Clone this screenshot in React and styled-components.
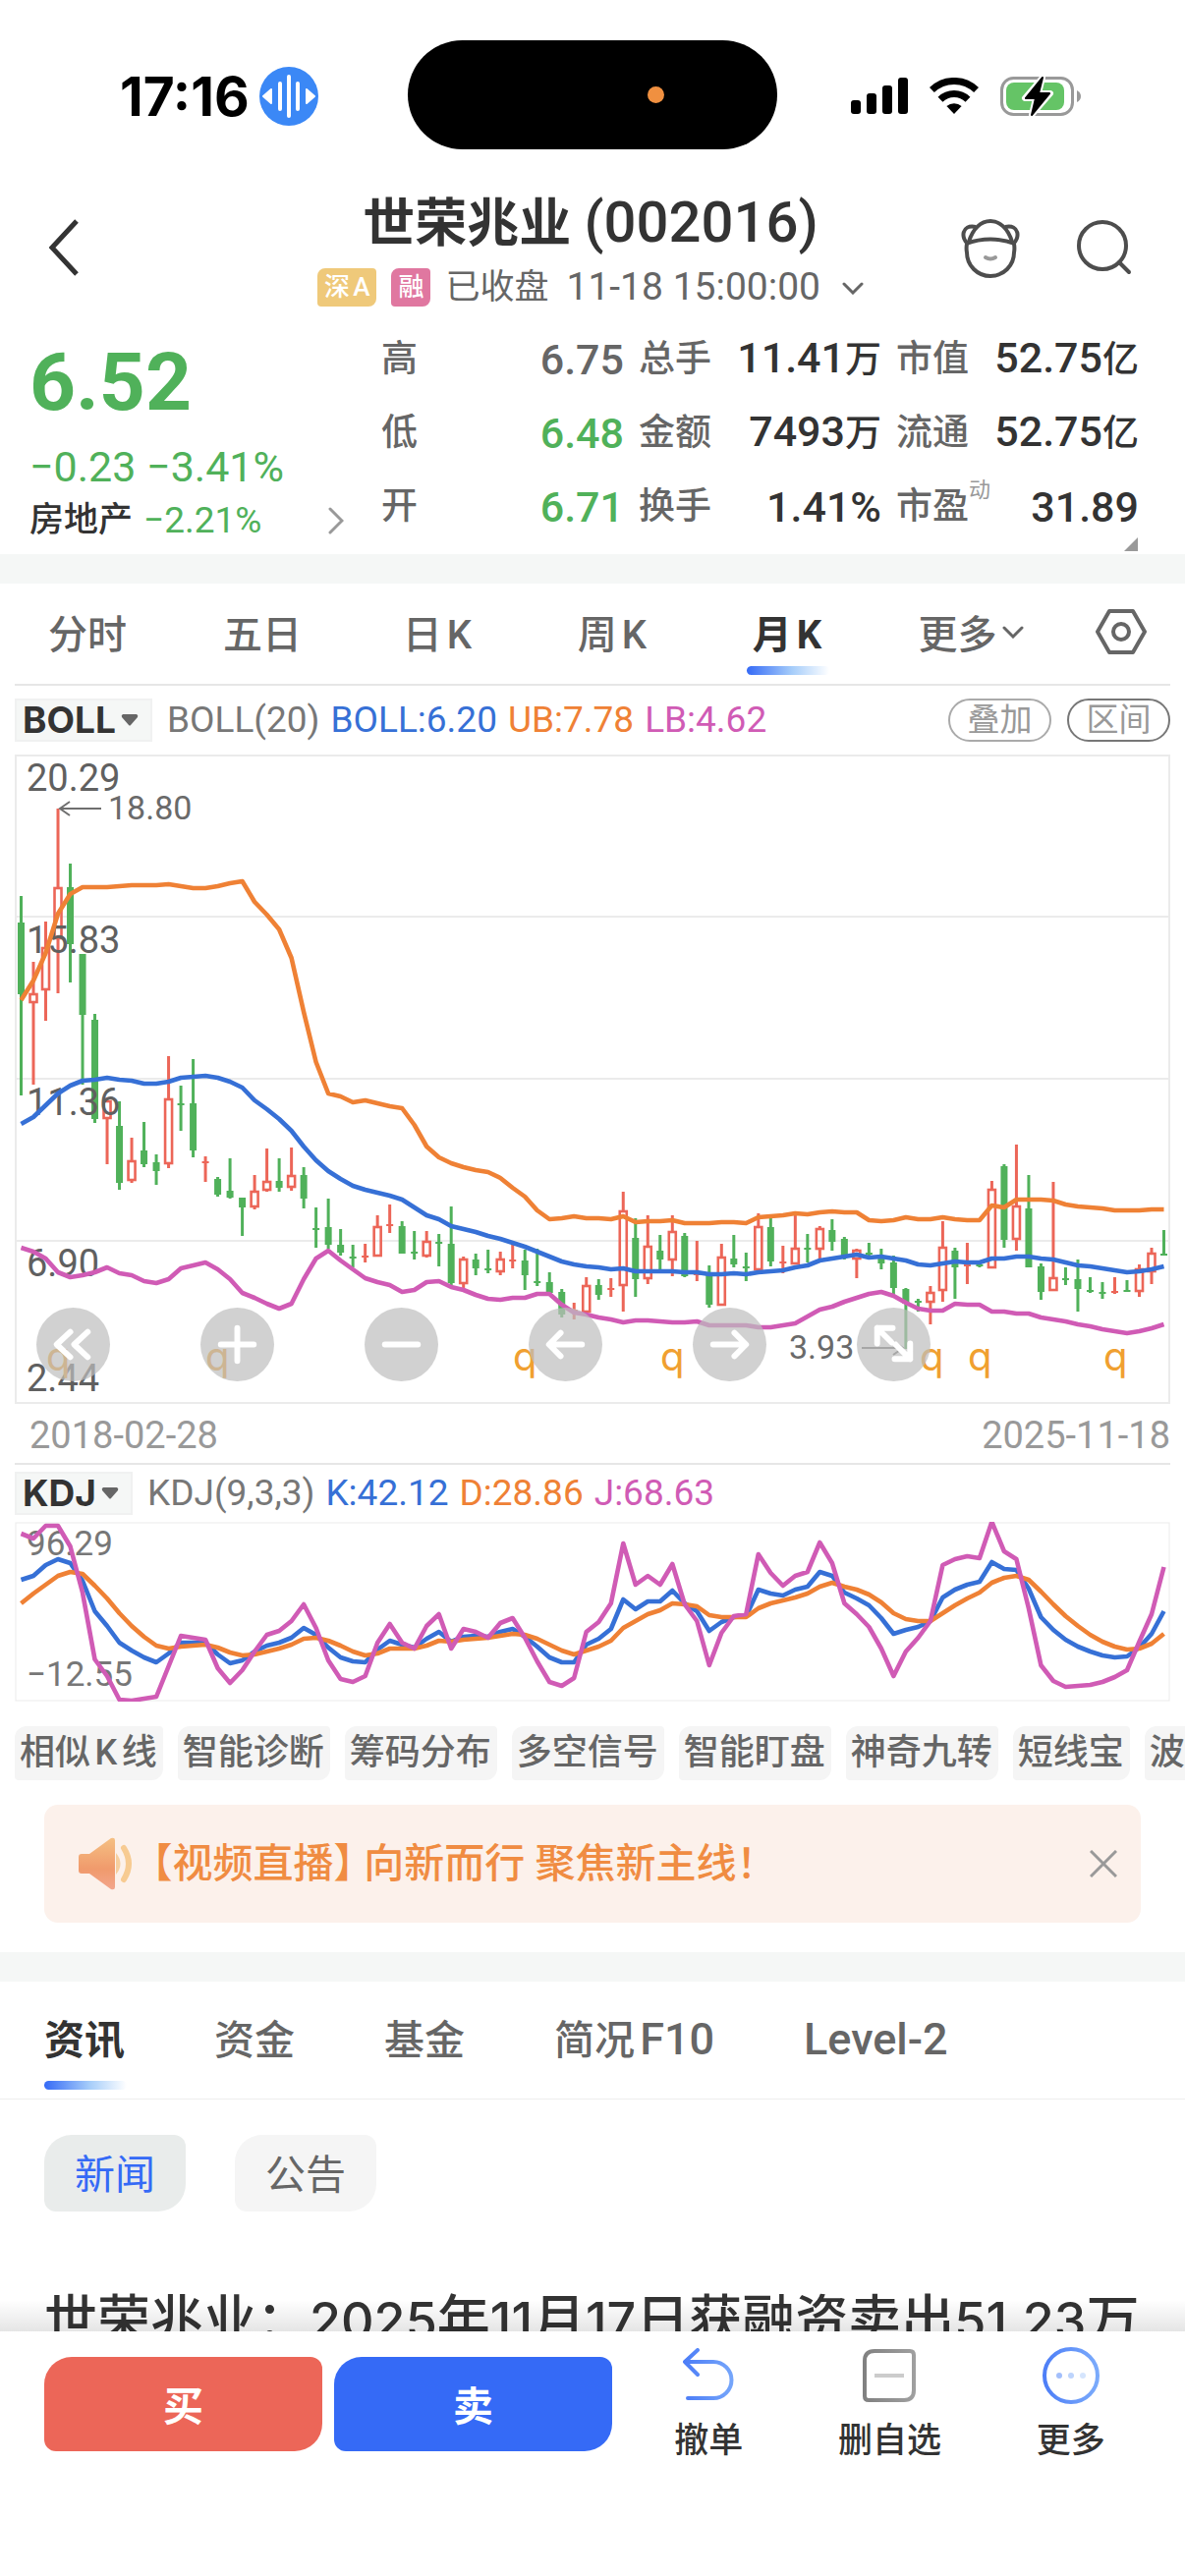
import React from "react";
import styled, { createGlobalStyle, css } from "styled-components";

const color = {
  ink: "#333333",
  text: "#666666",
  muted: "#999999",
  line: "#e6e6e6",
  band: "#f5f7f6",
  up: "#ec6658",
  down: "#50b15a",
  blue: "#3670d6",
  orange: "#ef8135",
  pink: "#d05bb5",
  brand: "#356af6",
};

const Global = createGlobalStyle`
  * { box-sizing: border-box; }
  body {
    margin: 0;
    background: #fff;
    color: ${color.text};
    font-family: Roboto, "Noto Sans CJK SC", sans-serif;
    text-autospace: normal;
  }
  button, select {
    border: 0;
    padding: 0;
    margin: 0;
    background: none;
    font: inherit;
    color: inherit;
    text-autospace: inherit;
  }
  svg { display: block; }
`;

const Screen = styled.div`
  display: flex;
  flex-direction: column;
  height: 100vh;
  overflow: hidden;
`;

const Content = styled.main`
  flex: 1;
  min-height: 0;
  overflow: hidden;
  position: relative;
`;

/* ---------- status bar ---------- */

const StatusBar = styled.div`
  display: grid;
  grid-template-columns: 1fr 376px 1fr;
  align-items: center;
  padding-top: 41px;
  color: #000;
`;

const StatusLeft = styled.div`
  display: flex;
  align-items: center;
  gap: 10px;
  padding: 3px 0 0 122px;
  font: 700 55px/60px Inter, sans-serif;
`;

const Island = styled.div`
  display: flex;
  align-items: center;
  justify-content: flex-end;
  height: 111px;
  padding-right: 115px;
  border-radius: 56px;
  background: #000;
`;

const RecordingDot = styled.span`
  width: 17px;
  height: 17px;
  border-radius: 50%;
  background: #f09040;
`;

const StatusRight = styled.div`
  display: flex;
  align-items: center;
  justify-content: flex-end;
  gap: 22px;
  padding: 2px 104px 0 0;
`;

/* ---------- header ---------- */

const Header = styled.header`
  display: grid;
  grid-template-columns: 1fr auto 1fr;
  align-items: center;
  padding: 44px 54px 0 50px;
`;

const IconButton = styled.button`
  display: inline-flex;
  align-items: center;
  justify-content: center;
`;

const HeaderActions = styled.div`
  display: flex;
  justify-content: flex-end;
  gap: 58px;
`;

const TitleBlock = styled.div`
  display: flex;
  flex-direction: column;
  align-items: center;
  gap: 13px;
`;

const Title = styled.h1`
  height: 64px;
  margin: 0;
  font-size: 53px;
  line-height: 64px;
  font-weight: 700;
  color: ${color.ink};
  white-space: nowrap;
`;

const Code = styled.span`
  font-size: 58px;
  font-weight: 500;
  line-height: 40px;
`;

const SubTitle = styled.div`
  display: flex;
  align-items: center;
  height: 39px;
  font-size: 35px;
  line-height: 39px;
  white-space: nowrap;
`;

const Badge = styled.span`
  padding: 0 7px;
  margin-right: 15px;
  border-radius: 8px 4px 8px 4px;
  background: ${(p) => p.$bg};
  color: #fff;
  font-size: 26px;
  font-weight: 500;
  line-height: 39px;
`;

const Clock = styled.time`
  margin: 0 22px 0 18px;
  font-size: 39px;
`;

/* ---------- quote ---------- */

const Quote = styled.section`
  position: relative;
  display: grid;
  grid-template-columns: 358px 1fr;
  height: 252px;
  padding: 0 47px 0 30px;
`;

const QuoteMain = styled.div`
  padding-top: 35px;
  color: ${color.down};
`;

const Price = styled.div`
  font-size: 82px;
  line-height: 84px;
  font-weight: 700;
`;

const Change = styled.div`
  margin-top: 20px;
  font-size: 43px;
  line-height: 48px;
  white-space: nowrap;
`;

const Sector = styled.a`
  display: flex;
  align-items: center;
  margin-top: 11px;
  padding-right: 38px;
  font-size: 37px;
  line-height: 40px;
  color: inherit;
  text-decoration: none;
  svg { margin-left: auto; }
`;

const SectorName = styled.span`
  margin-right: 11px;
  font-size: 35px;
  font-weight: 500;
  color: ${color.ink};
`;

const Stats = styled.dl`
  display: grid;
  grid-template-columns: repeat(3, 1fr);
  grid-auto-rows: 75px;
  column-gap: 15px;
  margin: 16px 0 0;
`;

const Stat = styled.div`
  display: flex;
  align-items: center;
  justify-content: space-between;
  white-space: nowrap;
  line-height: 48px;
`;

const StatLabel = styled.dt`
  display: flex;
  font-size: 37px;
  font-weight: 500;
  sup {
    margin-top: -4px;
    font-size: 22px;
    font-weight: 400;
    line-height: 22px;
    color: ${color.muted};
  }
`;

const StatValue = styled.dd`
  margin: 0;
  font-size: 43px;
  font-weight: 500;
  text-autospace: no-autospace;
  color: ${(p) => p.$color || color.ink};
  span { font-size: 37px; }
`;

const Corner = styled.svg`
  position: absolute;
  right: 48px;
  bottom: 3px;
`;

const Band = styled.div`
  height: 30px;
  background: ${color.band};
`;

/* ---------- period tabs ---------- */

const underline = css`
  &::after {
    content: "";
    position: absolute;
    left: ${(p) => p.$mark || "0"};
    bottom: 9px;
    width: 84px;
    height: 9px;
    border-radius: 5px;
    background: linear-gradient(90deg, #356af6, #a6cdfa 55%, #fff);
  }
`;

const PeriodTabs = styled.nav`
  display: grid;
  grid-template-columns: repeat(5, 178fr) 196fr 110fr;
  height: 102px;
  padding-right: 10px;
  font-size: 40px;
`;

const PeriodTab = styled.button`
  position: relative;
  display: flex;
  align-items: center;
  justify-content: center;
  gap: 5px;
  padding-bottom: 4px;
  font-weight: ${(p) => (p.$active ? 700 : 500)};
  color: ${(p) => (p.$active ? color.ink : color.text)};
  ${(p) => p.$active && underline}
`;

const Divider = styled.hr`
  height: 2px;
  margin: 0 15px;
  border: 0;
  background: ${color.line};
`;

/* ---------- indicator rows ---------- */

const IndicatorRow = styled.div`
  display: flex;
  align-items: center;
  height: ${(p) => p.$height};
  padding: 0 15px;
  font-size: 37px;
  line-height: 44px;
  white-space: nowrap;
`;

const Picker = styled.label`
  display: flex;
  align-items: center;
  gap: 5px;
  height: 44px;
  margin-right: 15px;
  padding: 0 12px 0 6px;
  border: 2px solid #f0f1f1;
  background: ${color.band};
  select {
    appearance: none;
    font: 700 37px/40px Inter, sans-serif;
    color: ${color.ink};
  }
`;

const Reading = styled.span`
  margin-right: 11px;
  color: ${(p) => p.$color || "#777777"};
`;

const PillGroup = styled.div`
  display: flex;
  gap: 16px;
  margin-left: auto;
`;

const Pill = styled.button`
  width: 105px;
  height: 44px;
  border: 2px solid ${(p) => p.$border};
  border-radius: 22px;
  font-size: 33px;
  line-height: 36px;
  color: ${color.muted};
`;

/* ---------- charts ---------- */

const ChartBox = styled.div`
  position: relative;
  margin: 0 15px;
`;

const ChartSvg = styled.svg`
  width: 100%;
  height: auto;
  font-family: Roboto, sans-serif;
`;

const ChartControls = styled.div`
  position: absolute;
  left: 22px;
  bottom: 23px;
  display: flex;
  gap: 92px;
`;

const RoundButton = styled.button`
  width: 75px;
  height: 75px;
  border-radius: 50%;
  background: rgba(190, 190, 190, 0.7);
`;

const Dates = styled.div`
  display: flex;
  justify-content: space-between;
  align-items: center;
  height: 60px;
  padding: 4px 15px 0 30px;
  font-size: 38px;
  line-height: 40px;
  color: ${color.muted};
`;

/* ---------- shortcuts and notice ---------- */

const Shortcuts = styled.div`
  display: flex;
  gap: 15px;
  padding: 25px 0 25px 15px;
  overflow: hidden;
`;

const Shortcut = styled.button`
  flex-shrink: 0;
  height: 55px;
  padding: 0 6px 0 5px;
  border-radius: 12px 4px 12px 4px;
  background: #f5f5f5;
  font-size: 36px;
  font-weight: 500;
  line-height: 55px;
`;

const Notice = styled.aside`
  display: flex;
  align-items: center;
  gap: 18px;
  height: 120px;
  margin: 0 45px 30px;
  padding: 0 24px 0 35px;
  border-radius: 14px;
  background: #fcf1eb;
  color: #f08c42;
  font-size: 41px;
  font-weight: 500;
  line-height: 60px;
  font-feature-settings: "halt";
  white-space: nowrap;
  button { margin-left: auto; }
`;

/* ---------- news ---------- */

const InfoTabs = styled.nav`
  display: flex;
  gap: 91px;
  height: 120px;
  padding-left: 45px;
  border-bottom: 1px solid #eeeeee;
`;

const InfoTab = styled.button`
  position: relative;
  font-size: 41px;
  line-height: 60px;
  font-weight: ${(p) => (p.$active ? 700 : 500)};
  color: ${(p) => (p.$active ? color.ink : color.text)};
  ${(p) => p.$active && underline}
`;

const Latin = styled.span`
  font-size: 45px;
  line-height: 40px;
`;

const Filters = styled.div`
  display: flex;
  gap: 50px;
  padding: 36px 45px 76px;
`;

const Filter = styled.button`
  width: 144px;
  height: 78px;
  padding-bottom: 4px;
  border-radius: 28px 12px 28px 12px;
  background: ${(p) => (p.$active ? "#e9eceb" : "#f5f5f5")};
  color: ${(p) => (p.$active ? color.brand : color.text)};
  font-size: 41px;
`;

const Headline = styled.a`
  display: block;
  margin: 0 45px;
  color: ${color.ink};
  font-size: 54px;
  font-weight: 500;
  line-height: 72px;
  text-decoration: none;
  text-autospace: no-autospace;
  white-space: nowrap;
`;

const Figure = styled.span`
  font-family: Inter, sans-serif;
  font-size: 52px;
  line-height: 40px;
`;

const Fade = styled.div`
  position: absolute;
  left: 0;
  right: 0;
  bottom: 0;
  height: 32px;
  background: linear-gradient(rgba(0, 0, 0, 0), rgba(0, 0, 0, 0.1));
`;

/* ---------- action bar ---------- */

const ActionBar = styled.footer`
  display: flex;
  align-items: flex-start;
  height: 249px;
  padding: 0 24px 0 45px;
`;

const TradeButtons = styled.div`
  display: flex;
  gap: 12px;
  margin: 26px 6px 0 0;
`;

const TradeButton = styled.button`
  width: 283px;
  height: 96px;
  padding-bottom: 2px;
  border-radius: 28px 12px 28px 12px;
  background: ${(p) => p.$bg};
  color: #fff;
  font-size: 41px;
  font-weight: 700;
`;

const Action = styled.button`
  flex: 1;
  display: flex;
  flex-direction: column;
  align-items: center;
  color: ${color.ink};
  font-size: 35px;
  font-weight: 500;
  line-height: 40px;
`;

const ActionIcon = styled.span`
  display: flex;
  align-items: center;
  justify-content: center;
  height: 60px;
  margin: 15px 0 17px;
`;

/* ---------- data: distances in chart units from the top of the pane ---------- */

const candles = [
  "g144,171,244,347", "r211,243,253,336", "r170,196,240,271", "r55,135,188,243", "g111,135,193,232",
  "g203,203,265,336", "g264,270,371,375", "r349,352,371,417", "g353,378,436,443", "r390,413,434,436",
  "g374,403,417,420", "g407,415,424,438", "r307,350,417,421", "g337,355,356,383", "g310,355,403,410",
  "r409,414,416,435", "g430,432,448,450", "g411,444,451,452", "g451,451,461,490", "r428,444,461,463",
  "r401,434,444,445", "g411,434,441,445", "r400,428,441,444", "g420,428,452,462", "g461,482,483,502",
  "g452,481,499,503", "g483,499,507,510", "g499,511,512,522", "r498,510,512,517", "r469,480,511,511",
  "r458,478,481,487", "g475,480,508,508", "g485,506,508,514", "r485,495,511,512", "g488,496,498,521",
  "g460,498,538,541", "r511,513,539,544", "g508,514,523,530", "g504,523,525,528", "r506,513,527,530",
  "r497,514,516,523", "g504,515,530,545", "g503,536,538,541", "g527,537,548,549", "g544,547,570,573",
  "r558,565,566,575", "r532,540,568,568", "g534,540,550,555", "r533,543,545,552", "r445,464,541,567",
  "g472,492,534,552", "r469,500,534,539", "g489,505,514,527", "r469,485,515,531", "g487,490,531,532",
  "r495,528,531,536", "g520,527,560,563", "r498,511,561,561", "g489,513,519,522", "g507,521,523,536",
  "r467,480,525,525", "g472,481,516,521", "r500,516,518,528", "r469,502,519,519", "g488,502,504,517",
  "r480,482,504,513", "g473,484,496,505", "g491,493,510,514", "r503,504,514,533", "g497,507,509,512",
  "g503,513,518,524", "g510,517,543,550", "g543,544,559,605", "g554,556,558,567", "r541,547,558,580",
  "r475,501,546,557", "g502,505,522,554", "r497,519,521,539", "g517,519,522,522", "r434,442,523,523",
  "g417,419,494,502", "r397,459,494,505", "g428,462,522,522", "g518,521,547,555", "r435,532,546,546",
  "g522,533,535,540", "g514,534,544,567", "g532,545,547,548", "g537,547,549,554", "r532,546,548,549",
  "g535,545,547,547", "r519,523,547,552", "r502,507,527,539", "g484,508,510,510",
].map((s) => ({ up: s[0] === "r", v: s.slice(1).split(",").map(Number) }));

const upper = [250, 230, 202, 162, 142, 135, 135, 135, 134, 133, 133, 133, 132, 134, 136, 136, 134, 131, 129, 150, 163, 178, 207, 262, 313, 345, 348, 354, 352, 355, 358, 360, 377, 399, 410, 416, 420, 423, 425, 431, 441, 450, 464, 473, 472, 470, 472, 472, 473, 470, 476, 475, 475, 474, 477, 477, 477, 476, 476, 477, 471, 470, 469, 467, 468, 466, 465, 466, 466, 474, 475, 474, 471, 473, 473, 471, 473, 474, 474, 459, 461, 453, 453, 453, 454, 458, 460, 461, 462, 464, 464, 464, 463, 463];
const middle = [376, 369, 357, 345, 337, 332, 331, 329, 331, 332, 335, 335, 333, 329, 328, 327, 329, 333, 339, 352, 361, 371, 383, 399, 413, 424, 432, 439, 443, 446, 449, 453, 461, 469, 473, 480, 483, 486, 490, 493, 497, 501, 506, 511, 516, 519, 521, 522, 524, 523, 526, 526, 526, 526, 527, 527, 529, 529, 528, 529, 527, 526, 525, 522, 520, 515, 513, 511, 509, 512, 511, 513, 515, 519, 520, 518, 516, 517, 517, 513, 513, 511, 511, 513, 514, 517, 520, 521, 523, 525, 527, 526, 524, 521];
const lower = [502, 506, 513, 527, 532, 530, 527, 522, 528, 530, 536, 538, 534, 523, 520, 517, 524, 534, 548, 553, 559, 564, 559, 534, 513, 505, 515, 524, 533, 537, 540, 547, 545, 537, 536, 542, 545, 550, 554, 555, 553, 553, 549, 549, 560, 568, 570, 573, 575, 578, 576, 576, 577, 578, 578, 577, 581, 581, 581, 581, 583, 583, 581, 579, 572, 565, 562, 557, 553, 549, 547, 551, 558, 564, 566, 566, 559, 560, 560, 567, 567, 569, 569, 573, 575, 577, 580, 582, 585, 587, 589, 587, 584, 580];

const kLine = [59, 55, 44, 38, 42, 60, 91, 106, 123, 131, 138, 143, 134, 123, 123, 123, 135, 144, 141, 132, 126, 123, 118, 108, 115, 128, 138, 142, 143, 130, 121, 125, 128, 119, 112, 122, 117, 116, 117, 112, 109, 117, 127, 138, 143, 143, 125, 119, 109, 79, 89, 81, 81, 70, 83, 91, 111, 102, 97, 96, 69, 73, 75, 69, 66, 51, 55, 72, 78, 85, 98, 114, 110, 107, 101, 77, 69, 64, 61, 41, 48, 49, 68, 97, 110, 120, 127, 132, 136, 138, 137, 128, 114, 91];
const dLine = [83, 73, 64, 55, 51, 53, 65, 78, 93, 106, 117, 126, 129, 127, 126, 125, 128, 133, 136, 135, 132, 129, 125, 119, 118, 121, 126, 132, 136, 134, 129, 129, 129, 126, 121, 122, 120, 119, 118, 116, 114, 115, 119, 125, 131, 135, 131, 127, 121, 108, 101, 94, 90, 83, 84, 86, 95, 97, 97, 97, 88, 83, 80, 77, 73, 66, 62, 66, 69, 74, 82, 93, 99, 101, 101, 93, 85, 78, 72, 62, 57, 55, 59, 71, 84, 96, 106, 115, 122, 127, 130, 129, 124, 114];
const jLine = [12, 17, 4, 4, 25, 72, 140, 157, 181, 182, 180, 178, 147, 116, 118, 120, 149, 164, 151, 132, 115, 111, 101, 84, 108, 141, 160, 163, 157, 123, 104, 123, 129, 106, 94, 129, 109, 112, 118, 103, 98, 118, 142, 163, 167, 159, 112, 102, 83, 22, 64, 55, 64, 43, 84, 101, 146, 113, 96, 94, 33, 52, 65, 55, 51, 21, 42, 83, 94, 107, 129, 157, 132, 118, 101, 44, 38, 35, 37, 0, 30, 38, 88, 146, 162, 168, 167, 166, 163, 158, 151, 122, 94, 46];

const xAt = (i) => 6.5 + (i * 1163) / 93;
const toPoints = (ys) => ys.map((y, i) => `${xAt(i).toFixed(1)},${y}`).join(" ");

function Series({ ys, stroke }) {
  return <polyline points={toPoints(ys)} fill="none" stroke={stroke} strokeWidth="4.6" strokeLinejoin="round" />;
}

function Candle({ x, up, v: [high, top, bottom, low] }) {
  const tone = up ? color.up : color.down;
  if (bottom - top < 4) {
    return (
      <g fill={tone}>
        <rect x={x - 1.5} y={high} width="3" height={low - high} />
        <rect x={x - 3.5} y={top} width="7" height="2" />
      </g>
    );
  }
  if (up) {
    return (
      <g fill={tone}>
        <rect x={x - 1.5} y={high} width="3" height={top - high} />
        <rect x={x - 1.5} y={bottom} width="3" height={low - bottom} />
        <rect x={x - 3.5} y={top + 1} width="7" height={bottom - top - 2} fill="none" stroke={tone} strokeWidth="2.6" />
      </g>
    );
  }
  return (
    <g fill={tone}>
      <rect x={x - 1.5} y={high} width="3" height={low - high} />
      <rect x={x - 3.5} y={top} width="7" height={bottom - top} />
    </g>
  );
}

const axis = [["20.29", 37], ["15.83", 202], ["11.36", 367], ["6.90", 531], ["2.44", 648]];
const marks = [32, 194, 507, 657, 921, 970, 1108];

function PriceChart() {
  return (
    <ChartSvg viewBox="0 0 1176 661" role="img" aria-label="月K线与布林带">
      <rect x="1" y="1" width="1174" height="659" fill="#fff" stroke="#ebebeb" strokeWidth="2" />
      {[165, 330, 495].map((y) => (
        <line key={y} x1="0" x2="1176" y1={y} y2={y} stroke="#ebebeb" strokeWidth="2" />
      ))}
      {candles.map((c, i) => (
        <Candle key={i} x={xAt(i)} {...c} />
      ))}
      <g fill="#606060" fontSize="38">
        {axis.map(([t, y]) => (
          <text key={t} x="12" y={y}>{t}</text>
        ))}
      </g>
      <g fill="#6a6a6a" fontSize="34">
        <text x="95" y="66">18.80</text>
        <text x="788" y="615">3.93</text>
      </g>
      <g fill="none" stroke="#6e6e6e" strokeWidth="2">
        <path d="M88 55H46M56 48L46 55L56 62" />
        <path d="M862 604H904M894 597L904 604L894 611" />
      </g>
      <Series ys={upper} stroke={color.orange} />
      <Series ys={middle} stroke={color.blue} />
      <Series ys={lower} stroke={color.pink} />
      <g fill="#f0a030" fontSize="40" fontFamily="Inter">
        {marks.map((x) => (
          <text key={x} x={x} y="627">q</text>
        ))}
      </g>
    </ChartSvg>
  );
}

function KdjChart() {
  return (
    <ChartSvg viewBox="0 0 1176 183" role="img" aria-label="KDJ指标">
      <rect x="1" y="1" width="1174" height="181" fill="#fff" stroke="#ebebeb" strokeWidth="1" />
      <g fill="#777777" fontSize="35">
        <text x="12" y="34">96.29</text>
        <text x="12" y="167">−12.55</text>
      </g>
      <Series ys={kLine} stroke={color.blue} />
      <Series ys={dLine} stroke={color.orange} />
      <Series ys={jLine} stroke={color.pink} />
    </ChartSvg>
  );
}

const controls = [
  ["最早", "M35 25L21 38L35 51M53 25L39 38L53 51"],
  ["放大", "M21 38H55M38 21V55"],
  ["缩小", "M21 38H55"],
  ["左移", "M55 38H22M33 26L21 38L33 50"],
  ["右移", "M21 38H54M43 26L55 38L43 50"],
  ["全屏", "M36 36L21 21M21 37V21H37M40 38L55 53M55 37V53H39"],
];

function Caret({ w = 22, h = 14, stroke = color.text, d = "M2 3L11 12L20 3" }) {
  return (
    <svg width={w} height={h} viewBox={`0 0 ${w} ${h}`} fill="none" stroke={stroke} strokeWidth="3" strokeLinecap="round">
      <path d={d} />
    </svg>
  );
}

function IndicatorPicker({ name, label }) {
  return (
    <Picker>
      <select aria-label={label} defaultValue={name}>
        <option>{name}</option>
      </select>
      <svg width="18" height="12" viewBox="0 0 18 12" fill={color.text}>
        <path d="M2 0H16Q18 1 17 3L10 11Q9 12 8 11L1 3Q0 1 2 0Z" />
      </svg>
    </Picker>
  );
}

const stats = [
  ["高", "6.75", "", color.text], ["总手", "11.41", "万"], ["市值", "52.75", "亿"],
  ["低", "6.48", "", color.down], ["金额", "7493", "万"], ["流通", "52.75", "亿"],
  ["开", "6.71", "", color.down], ["换手", "1.41%", ""], ["市盈", "31.89", "", color.ink, "动"],
];

export default function App() {
  return (
    <Screen>
      <Global />
      <Content>
        <StatusBar>
          <StatusLeft>
            17:16
            <svg width="60" height="60" viewBox="0 0 60 60">
              <circle cx="30" cy="30" r="30" fill="#3b88f6" />
              <path d="M30 10V50M21 17V43M39 17V43" stroke="#fff" strokeWidth="4" strokeLinecap="round" />
              <path d="M4 30L12 23V37ZM56 30L48 23V37Z" fill="#fff" stroke="#fff" strokeWidth="2" strokeLinejoin="round" />
            </svg>
          </StatusLeft>
          <Island>
            <RecordingDot />
          </Island>
          <StatusRight>
            <svg width="58" height="38" viewBox="0 0 58 38">
              <rect x="0" y="23" width="10" height="14" rx="3" />
              <rect x="16" y="16" width="10" height="21" rx="3" />
              <rect x="32" y="8" width="10" height="29" rx="3" />
              <rect x="48" y="0" width="10" height="37" rx="3" />
            </svg>
            <svg width="50" height="38" viewBox="0 0 50 38" fill="none" stroke="#000" strokeWidth="7">
              <path d="M2.4 12.6A32.5 32.5 0 0 1 47.6 12.6" />
              <path d="M11 22.2A20 20 0 0 1 39 22.2" />
              <path d="M17.4 29A11.5 11.5 0 0 1 32.6 29L25 37Z" fill="#000" stroke="none" />
            </svg>
            <svg width="84" height="40" viewBox="0 0 84 40">
              <rect x="1.5" y="1.5" width="72" height="37" rx="12" fill="none" stroke="#999" strokeWidth="3" />
              <rect x="6" y="6" width="59" height="28" rx="8" fill="#65c466" />
              <path d="M78 14Q82 16 82 20T78 26Z" fill="#999" />
              <path d="M43 1L25 22H36L32 39L51 17H39Z" fill="#000" stroke="#fff" strokeWidth="6" strokeLinejoin="round" paintOrder="stroke" />
              <path d="M43 1L26 22H36L32 39L50 17H39Z" stroke="#000" strokeWidth="2" strokeLinejoin="round" />
            </svg>
          </StatusRight>
        </StatusBar>

        <Header>
          <div>
            <IconButton aria-label="返回">
              <svg width="30" height="58" viewBox="0 0 30 58" fill="none" stroke={color.ink} strokeWidth="5">
                <path d="M28 2L3 29L28 56" />
              </svg>
            </IconButton>
          </div>
          <TitleBlock>
            <Title>
              世荣兆业 <Code>(002016)</Code>
            </Title>
            <SubTitle>
              <Badge $bg="#efc97a">深A</Badge>
              <Badge $bg="#e077a0">融</Badge>
              已收盘
              <Clock>11-18 15:00:00</Clock>
              <Caret />
            </SubTitle>
          </TitleBlock>
          <HeaderActions>
            <IconButton aria-label="智能助手">
              <svg width="60" height="62" viewBox="0 0 60 62" fill="none" stroke="#4d4d4d" strokeWidth="4">
                <path d="M6 25A25 25 0 0 0 6 34A24 24 0 0 0 54 34A25 25 0 0 0 54 25" />
                <path d="M5 25Q30 16 55 25" />
                <path d="M8 23C12 10 20 2 30 2S48 10 52 23" />
                <path d="M7 25C0 20 0 5 15 8M53 25C60 20 60 5 45 8" />
                <path d="M25 39Q30 42 35 39" stroke="#999" strokeLinecap="round" />
              </svg>
            </IconButton>
            <IconButton aria-label="搜索">
              <svg width="56" height="60" viewBox="0 0 56 60" fill="none" stroke="#4d4d4d" strokeWidth="4" strokeLinecap="round">
                <circle cx="26" cy="26" r="24" />
                <path d="M43 43L53 53" />
              </svg>
            </IconButton>
          </HeaderActions>
        </Header>

        <Quote>
          <QuoteMain>
            <Price>6.52</Price>
            <Change>−0.23 −3.41%</Change>
            <Sector href="#sector">
              <SectorName>房地产</SectorName>−2.21%
              <Caret w={16} h={28} stroke={color.muted} d="M2 2L14 14L2 26" />
            </Sector>
          </QuoteMain>
          <Stats>
            {stats.map(([label, value, unit, tone, sup]) => (
              <Stat key={label}>
                <StatLabel>
                  {label}
                  {sup && <sup>{sup}</sup>}
                </StatLabel>
                <StatValue $color={tone}>
                  {value}
                  {unit && <span>{unit}</span>}
                </StatValue>
              </Stat>
            ))}
          </Stats>
          <Corner width="14" height="14" viewBox="0 0 14 14" fill="#999">
            <path d="M14 0V14H0Z" />
          </Corner>
        </Quote>
        <Band />

        <PeriodTabs>
          <PeriodTab>分时</PeriodTab>
          <PeriodTab>五日</PeriodTab>
          <PeriodTab>日K</PeriodTab>
          <PeriodTab>周K</PeriodTab>
          <PeriodTab $active $mark="48px">月K</PeriodTab>
          <PeriodTab>
            更多
            <Caret />
          </PeriodTab>
          <PeriodTab aria-label="设置">
            <svg width="52" height="48" viewBox="0 0 52 48" fill="none" stroke={color.text} strokeWidth="4" strokeLinejoin="round">
              <path d="M2 24L14 3H38L50 24L38 45H14Z" />
              <circle cx="26" cy="24" r="8" />
            </svg>
          </PeriodTab>
        </PeriodTabs>
        <Divider />

        <IndicatorRow $height="70px">
          <IndicatorPicker name="BOLL" label="主图指标" />
          <Reading>BOLL(20)</Reading>
          <Reading $color={color.blue}>BOLL:6.20</Reading>
          <Reading $color={color.orange}>UB:7.78</Reading>
          <Reading $color={color.pink}>LB:4.62</Reading>
          <PillGroup>
            <Pill $border="#aaaaaa">叠加</Pill>
            <Pill $border="#777777">区间</Pill>
          </PillGroup>
        </IndicatorRow>
        <ChartBox>
          <PriceChart />
          <ChartControls>
            {controls.map(([label, d]) => (
              <RoundButton key={label} aria-label={label}>
                <svg width="75" height="75" viewBox="0 0 76 76" fill="none" stroke="#fff" strokeWidth="6" strokeLinecap="round" strokeLinejoin="round">
                  <path d={d} />
                </svg>
              </RoundButton>
            ))}
          </ChartControls>
        </ChartBox>
        <Dates>
          <time>2018-02-28</time>
          <time>2025-11-18</time>
        </Dates>
        <Divider />

        <IndicatorRow $height="58px">
          <IndicatorPicker name="KDJ" label="副图指标" />
          <Reading>KDJ(9,3,3)</Reading>
          <Reading $color={color.blue}>K:42.12</Reading>
          <Reading $color={color.orange}>D:28.86</Reading>
          <Reading $color={color.pink}>J:68.63</Reading>
        </IndicatorRow>
        <ChartBox>
          <KdjChart />
        </ChartBox>

        <Shortcuts>
          {["相似K线", "智能诊断", "筹码分布", "多空信号", "智能盯盘", "神奇九转", "短线宝", "波段"].map((t) => (
            <Shortcut key={t}>{t}</Shortcut>
          ))}
        </Shortcuts>

        <Notice>
          <svg width="57" height="54" viewBox="0 0 57 54">
            <defs>
              <linearGradient id="horn" x1="0" y1="0" x2="0" y2="1">
                <stop offset="0" stopColor="#f5c083" />
                <stop offset="0.6" stopColor="#f09a6c" />
                <stop offset="1" stopColor="#f3a58c" />
              </linearGradient>
            </defs>
            <path d="M38 16Q47 27 38 38Z" fill="#f6cf9f" />
            <path d="M46 11Q56 27 46 43" fill="none" stroke="#f7cb92" strokeWidth="6" strokeLinecap="round" />
            <path d="M3 17H11L33 1Q37 0 37 3V51Q37 54 33 53L11 37H3Q0 37 0 34V20Q0 17 3 17Z" fill="url(#horn)" />
          </svg>
          <span>【视频直播】 向新而行 聚焦新主线！</span>
          <IconButton aria-label="关闭">
            <svg width="28" height="28" viewBox="0 0 28 28" stroke="#999" strokeWidth="3">
              <path d="M1 1L27 27M27 1L1 27" />
            </svg>
          </IconButton>
        </Notice>
        <Band />

        <InfoTabs>
          <InfoTab $active>资讯</InfoTab>
          <InfoTab>资金</InfoTab>
          <InfoTab>基金</InfoTab>
          <InfoTab>
            简况<Latin>F10</Latin>
          </InfoTab>
          <InfoTab>
            <Latin>Level-2</Latin>
          </InfoTab>
        </InfoTabs>
        <Filters>
          <Filter $active>新闻</Filter>
          <Filter>公告</Filter>
        </Filters>
        <Headline href="#news">
          世荣兆业：<Figure>2025</Figure>年<Figure>11</Figure>月<Figure>17</Figure>日获融资卖出<Figure>51.23</Figure>万
        </Headline>
        <Fade />
      </Content>

      <ActionBar>
        <TradeButtons>
          <TradeButton $bg={color.up}>买</TradeButton>
          <TradeButton $bg={color.brand}>卖</TradeButton>
        </TradeButtons>
        <Action>
          <ActionIcon>
            <svg width="52" height="56" viewBox="0 0 52 56" fill="none" stroke="url(#tint)" strokeWidth="4" strokeLinecap="round" strokeLinejoin="round">
              <defs>
                <linearGradient id="tint" gradientUnits="userSpaceOnUse" x1="0" y1="0" x2="56" y2="0">
                  <stop offset="0" stopColor="#4b7cf7" />
                  <stop offset="1" stopColor="#7aaafb" />
                </linearGradient>
              </defs>
              <path d="M15 2L2 14L15 27M2 14H31A18.5 18.5 0 0 1 31 51H5" />
            </svg>
          </ActionIcon>
          撤单
        </Action>
        <Action>
          <ActionIcon>
            <svg width="54" height="54" viewBox="0 0 54 54" fill="none" strokeWidth="4">
              <defs>
                <linearGradient id="ash" gradientUnits="userSpaceOnUse" x1="0" y1="0" x2="54" y2="0">
                  <stop offset="0" stopColor="#808080" />
                  <stop offset="1" stopColor="#a0a0a0" />
                </linearGradient>
              </defs>
              <path d="M12 2H48Q52 2 52 6V42Q52 52 42 52H6Q2 52 2 48V12Q2 2 12 2Z" stroke="url(#ash)" />
              <path d="M12 27H42" stroke="#cccccc" />
            </svg>
          </ActionIcon>
          删自选
        </Action>
        <Action>
          <ActionIcon>
            <svg width="60" height="60" viewBox="0 0 60 60">
              <circle cx="30" cy="30" r="27" fill="none" stroke="url(#tint)" strokeWidth="4" />
              <circle cx="18" cy="30" r="3" fill="#a3bffb" />
              <circle cx="30" cy="30" r="3" fill="#bdd4fc" />
              <circle cx="42" cy="30" r="3" fill="#d5e5fd" />
            </svg>
          </ActionIcon>
          更多
        </Action>
      </ActionBar>
    </Screen>
  );
}
